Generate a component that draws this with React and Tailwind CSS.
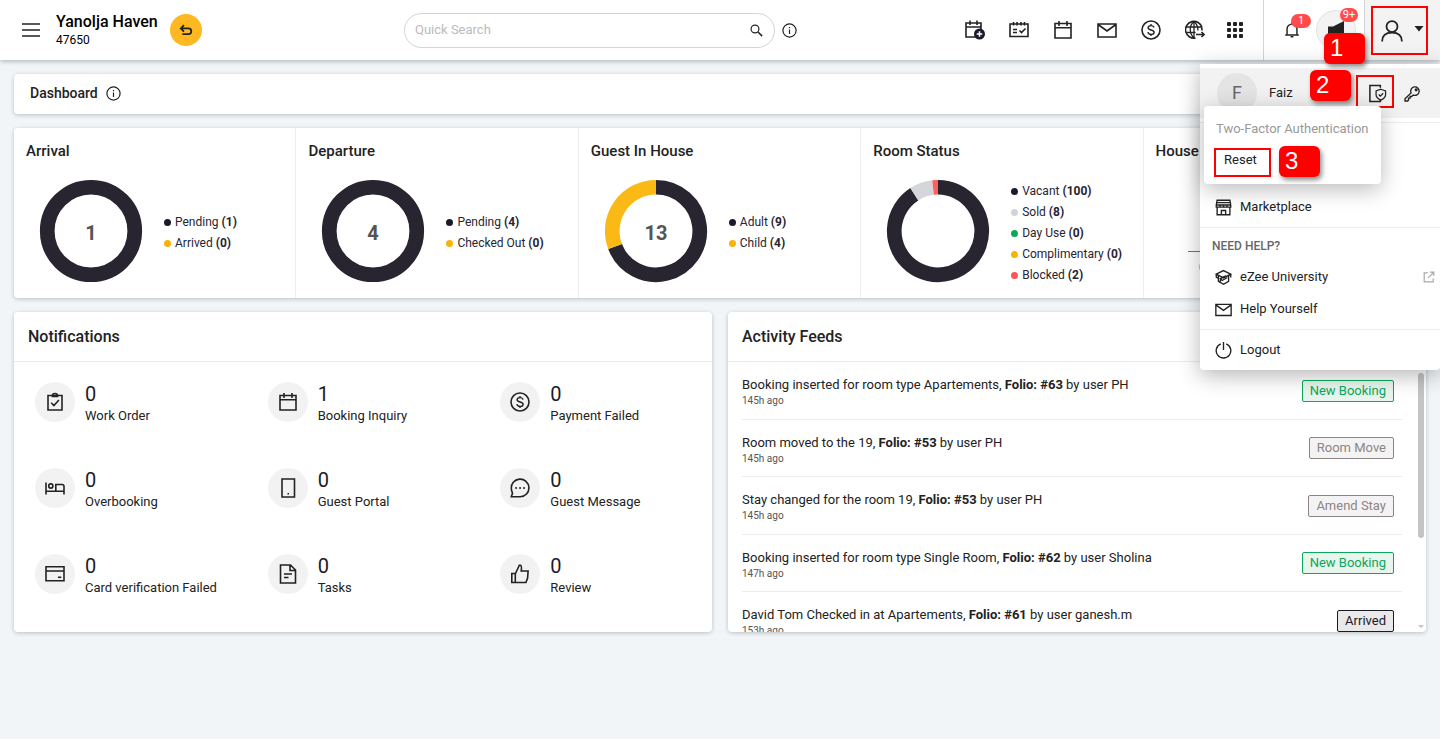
const STATS = [
  { title: 'Arrival', total: '1', items: [
    { label: 'Pending', value: 1, color: '#1c1a2a', ring: '#282430' },
    { label: 'Arrived', value: 0, color: '#f9b208' },
  ] },
  { title: 'Departure', total: '4', items: [
    { label: 'Pending', value: 4, color: '#1c1a2a', ring: '#282430' },
    { label: 'Checked Out', value: 0, color: '#f9b208' },
  ] },
  { title: 'Guest In House', total: '13', items: [
    { label: 'Adult', value: 9, color: '#1c1a2a', ring: '#282430' },
    { label: 'Child', value: 4, color: '#f9b208', ring: '#fab915' },
  ] },
  { title: 'Room Status', total: '', items: [
    { label: 'Vacant', value: 100, color: '#1c1a2a', ring: '#282430' },
    { label: 'Sold', value: 8, color: '#d2d3d8', ring: '#d5d6da' },
    { label: 'Day Use', value: 0, color: '#0aa858' },
    { label: 'Complimentary', value: 0, color: '#f9b208' },
    { label: 'Blocked', value: 2, color: '#ff5454', ring: '#ff5f5f' },
  ] },
]

const FEEDS = [
  { before: 'Booking inserted for room type Apartements, ', folio: '#63', by: 'PH', ago: '145h ago', tag: 'New Booking' },
  { before: 'Room moved to the 19, ', folio: '#53', by: 'PH', ago: '145h ago', tag: 'Room Move' },
  { before: 'Stay changed for the room 19, ', folio: '#53', by: 'PH', ago: '145h ago', tag: 'Amend Stay' },
  { before: 'Booking inserted for room type Single Room, ', folio: '#62', by: 'Sholina', ago: '147h ago', tag: 'New Booking' },
  { before: 'David Tom Checked in at Apartements, ', folio: '#61', by: 'ganesh.m', ago: '153h ago', tag: 'Arrived' },
]

const TAG_STYLES = {
  'New Booking': 'border-[#0aa858] bg-[#e8f5ee] text-[#0aa858]',
  'Room Move': 'border-[#8d8486] bg-[#f4f3f3] text-[#8d8486]',
  'Amend Stay': 'border-[#8d8486] bg-[#f4f3f3] text-[#8d8486]',
  Arrived: 'border-[#1c1a2a] bg-[#e9e9ea] text-[#1c1a2a]',
}

const ICONS = {
  menu: <path d="M1 4h18M1 10h18M1 16h18" strokeWidth="1.6" />,
  undo: <path d="M7.5 4 3.500 8l4 4M4 8h9a3.600 3.600 0 0 1 0 7.200H5.500" strokeWidth="2.200" />,
  search: <><circle cx="8" cy="8" r="5.2" /><path d="m12 12 5.5 5.5" strokeWidth="2" /></>,
  info: <><circle cx="10" cy="10" r="8.8" /><path d="M10 8.5v6M10 5.3v1.8" /></>,
  calendarPlus: <>
    <path d="M1 3h15v14H1zM1 7h15M5 .5V5M12 .5V5" />
    <circle cx="14.5" cy="14" r="5.5" fill="#1c1a2a" stroke="none" />
    <path d="M14.5 11.2v5.6M11.7 14h5.6" stroke="#fff" />
  </>,
  calendarCheck: <>
    <path d="M1 4h18v12.5H1zM4.5 2v3.5M8 2v3.5M12 2v3.5M15.5 2v3.5" />
    <path d="M4 9.5h4M4 12.5h4M10.5 10.5l2 2 4-4" />
  </>,
  calendar: <path d="M2 3.5h16v14.5H2zM2 7.8h16M6 1v5M14 1v5" />,
  mail: <path d="M1 4h18v13H1zM1 4.5 10 11l9-6.500" />,
  dollar: <>
    <circle cx="10" cy="10" r="9" />
    <path d="M13 7.600c-.3-1.300-1.400-2-3-2s-2.900.7-2.900 2.100c0 3 6 1.500 6 4.500 0 1.400-1.300 2.200-3 2.200s-3-.8-3.200-2.200M10 3.900v1.700M10 14.400V16" strokeWidth="1.400" />
  </>,
  globe: <>
    <path d="M17 7.500A8.400 8.400 0 1 0 10.500 18" />
    <path d="M9 1.500c-5 4-5 12 0 16.500M9 1.500c3 2.400 4 5.500 3.900 9M9 1.500v16.500M1 7h16M1 12.500h9.500" strokeWidth="1.300" />
    <path d="M16.500 7.500c.4 1 .6 2 .5 3M11 14.500h8M16.500 12l2.600 2.500-2.600 2.500" />
  </>,
  bell: <path d="M2.500 15.500h15M4.500 15.500V9a5.500 5.500 0 0 1 11 0v6.500M10 3.500V1.500M8.500 17.500h3" />,
  user: <><circle cx="10" cy="6" r="5" /><path d="M1 19.500c0-5.500 3.800-8 9-8s9 2.500 9 8" /></>,
  shieldPhone: <>
    <path d="M13 4V1.500H2v17h11V16.500" />
    <path d="m13.500 5.500 5 1.800v4c0 2.700-2 4.300-5 5.700-3-1.400-5-3-5-5.700v-4zM11.300 11l1.700 1.700 3-3" strokeWidth="1.300" />
  </>,
  key: <>
    <path d="M8.300 9.300a5 5 0 1 1 2.500 2.500L9 13.500H7.200v2H5.300v2.300l-1 1H1.200v-2.500z" />
    <circle cx="14.300" cy="5.700" r="1" />
  </>,
  store: <>
    <path d="M2.500 1.500h15l1 5.500v2.500H1.500V7zM2.500 4.200h15M1.800 7h16.400M2.500 9.500v9h15v-9M7.500 18.500v-5h5v5" />
    <path d="M6 7v2.500M10 7v2.500M14 7v2.500" />
  </>,
  university: <>
    <path d="M1.500 6 10 1.800 18.500 6 10 10.500zM4 7.800v6.700l6 3.500 6-3.500V7.800M1.500 6v3.500l2.500 1.500M18.500 6v4" />
    <path d="M6 15.500c0-4 2.500-6.500 7-7.500M5.500 10.500l3 3 6-3.500" />
  </>,
  power: <path d="M6.800 2.200a8.600 8.600 0 1 0 6.400 0M10 0v9.500" />,
  external: <path d="M8 3H2v15h15v-6M11.500 2H18v6.500M17.500 2.500 8.500 11.500" strokeWidth="2" />,
  clipboard: <path d="M3 3.500h14V18H3zM7.500 3.500a2.500 2 0 0 1 5 0v1h-5zM6.200 10.800l2.700 2.700 5-5.500" />,
  bed: <><path d="M1 4.500v12M1 13.300h18M19 16.500v-8h0a2 2 0 0 0-2-2h-6.200v6.800" /><circle cx="5.800" cy="8" r="2.100" /></>,
  phone: <><path d="M4 1h12.500v18H4z" /><path d="M9.500 15.800h1.500" /></>,
  message: <><path d="M1.300 18.700h8.900A8.800 8.800 0 1 0 1.400 11c.1 1.800.7 3.200 1.100 4.200z" /><path d="M5.300 10h1.500M9.300 10h1.500M13.300 10h1.500" strokeWidth="2" /></>,
  card: <><path d="M1 2.800h18v14H1zM1 7h18" /><path d="M13 13.300h3.300" /></>,
  doc: <path d="M2.500 1h10l5 5v13h-15zM12 1.500v5h5M6 10h8M6 13.500h4.500" />,
  thumb: <path d="M1.800 9.500h3.500v9H1.800zM5.300 10 8.500 3c.5-1.800 1-2 1.900-1.800 1.300.3 1.400 1.800.8 5.800h6.900l-.5 7-1.700 4.500H5.300" />,
}

const NOTIFICATIONS = [
  { icon: 'clipboard', count: 0, label: 'Work Order' },
  { icon: 'calendar', count: 1, label: 'Booking Inquiry' },
  { icon: 'dollar', count: 0, label: 'Payment Failed' },
  { icon: 'bed', count: 0, label: 'Overbooking' },
  { icon: 'phone', count: 0, label: 'Guest Portal' },
  { icon: 'message', count: 0, label: 'Guest Message' },
  { icon: 'card', count: 0, label: 'Card verification Failed' },
  { icon: 'doc', count: 0, label: 'Tasks' },
  { icon: 'thumb', count: 0, label: 'Review' },
]

function Icon({ name, className = 'size-5' }) {
  return (
    <svg viewBox="0 0 20 20" fill="none" stroke="currentColor" strokeWidth="1.6" className={`shrink-0 ${className}`} aria-hidden="true">
      {ICONS[name]}
    </svg>
  )
}

const RADIUS = 43.75

function pointAt(share) {
  const a = share * 2 * Math.PI
  return `${52 + RADIUS * Math.sin(a)} ${52 - RADIUS * Math.cos(a)}`
}

function Donut({ items, total }) {
  const sum = items.reduce((n, i) => n + i.value, 0)
  let used = 0
  return (
    <svg viewBox="0 0 104 104" className="size-26 shrink-0" fill="none" strokeWidth="14.7">
      {items.filter(i => i.value > 0).map(item => {
        if (item.value === sum) return <circle key={item.label} cx="52" cy="52" r={RADIUS} stroke={item.ring} />
        const from = used / sum
        used += item.value
        const large = item.value / sum > 0.5 ? 1 : 0
        return (
          <path
            key={item.label} stroke={item.ring}
            d={`M${pointAt(from)}A${RADIUS} ${RADIUS} 0 ${large} 1 ${pointAt(used / sum)}`}
          />
        )
      })}
      <text x="52" y="61" textAnchor="middle" fontSize="20" fontWeight="700" fill="#555">{total}</text>
    </svg>
  )
}

function StatCard({ title, items, total }) {
  return (
    <section className="border-r border-[#eceef0]">
      <h2 className="pl-3 pt-[11px] text-[15px] leading-6 font-medium">{title}</h2>
      <div className="flex gap-[21px] pl-[25px] pt-4">
        <Donut items={items} total={total} />
        <ul className="flex h-26 flex-col justify-center pt-1 text-xs leading-[21px] whitespace-nowrap text-[#282430]">
          {items.map(item => (
            <li key={item.label} className="flex items-center gap-1">
              <span className="size-[7px] rounded-full" style={{ backgroundColor: item.color }} />
              <span>{item.label} <b>({item.value})</b></span>
            </li>
          ))}
        </ul>
      </div>
    </section>
  )
}

function Callout({ children, className }) {
  return (
    <span className={`absolute z-40 h-[31px] w-[41px] rounded-md bg-[#fe0000] pl-1.5 font-['Liberation_Sans'] text-2xl leading-[29px] text-white shadow-[2px_3px_5px_rgba(0,0,0,0.45)] ${className}`}>
      {children}
    </span>
  )
}

function MenuLink({ icon, children, external }) {
  return (
    <a href="#" className="flex h-8 items-center gap-2 pl-[15px] pr-[5px] text-[13px]">
      <Icon name={icon} className="size-[17px]" />
      <span className="flex-1">{children}</span>
      {external && <Icon name="external" className="size-3 text-[#aaa]" />}
    </a>
  )
}

function ProfileMenu() {
  return (
    <div className="absolute right-0 top-16 z-20 w-60 rounded-b bg-white pt-1 shadow-[0_5px_22px_rgba(0,0,0,0.3)]">
      <div className="relative flex h-[50px] items-center bg-[#f2f2f2] pl-[17px] pr-[19px]">
        <span className="flex size-10 items-center justify-center rounded-full bg-[#e4e4e4] text-lg text-[#666]">F</span>
        <span className="pl-3 text-[13px]">Faiz</span>
        <button aria-label="Two-factor authentication" className="mb-[3px] ml-auto flex h-[33px] w-[38px] items-center justify-center border-2 border-[#fe0000] pl-1 pt-1">
          <Icon name="shieldPhone" className="size-[19px]" />
        </button>
        <button aria-label="Change password" className="pl-2.5"><Icon name="key" className="size-[17px]" /></button>
        <Callout className="left-[110px] top-0.5">2</Callout>

        <div className="absolute left-1 top-[38px] z-30 h-[78px] w-[177px] rounded-sm bg-white px-3 pt-[13px] text-[13px] shadow-[0_5px_22px_rgba(0,0,0,0.28)]">
          <p className="leading-5 whitespace-nowrap text-[#999]">Two-Factor Authentication</p>
          <button className="-ml-0.5 mt-[9px] h-[29px] w-[57px] border-2 border-[#fe0000] pb-1.5 pr-1 text-center">Reset</button>
          <Callout className="left-[75px] top-10">3</Callout>
        </div>
      </div>
      <div className="mt-1 border-t border-[#ececec] pb-1 pt-[68px]">
        <MenuLink icon="store">Marketplace</MenuLink>
      </div>
      <div className="border-t border-[#ececec] pb-1 pt-px">
        <h3 className="flex h-8 items-center pl-3 pt-0.5 text-xs font-medium text-[#666]">NEED HELP?</h3>
        <MenuLink icon="university" external>eZee University</MenuLink>
        <MenuLink icon="mail">Help Yourself</MenuLink>
      </div>
      <div className="border-t border-[#ececec] py-1">
        <MenuLink icon="power">Logout</MenuLink>
      </div>
    </div>
  )
}

function Header() {
  return (
    <header className="relative z-10 flex h-15 bg-white shadow-[0_1px_5px_rgba(0,0,0,0.3)]">
      <div className="flex w-[404px] shrink-0 items-center pl-[21px]">
        <button aria-label="Menu"><Icon name="menu" /></button>
        <div className="pl-[15px]">
          <h1 className="text-base leading-5 font-medium text-black">Yanolja Haven</h1>
          <p className="text-xs leading-4 text-black">47650</p>
        </div>
        <button aria-label="Back" className="ml-3 flex size-8 items-center justify-center rounded-full bg-[#ffb822]">
          <Icon name="undo" className="size-4" />
        </button>
      </div>
      <label className="mt-[13px] flex h-[35px] max-w-[371px] flex-1 items-center rounded-full border border-[#d4d4d4] pl-2.5 pr-2.5 pb-px">
        <input type="text" aria-label="Quick Search" placeholder="Quick Search" className="min-w-0 flex-1 text-[13px] outline-none placeholder:text-[#bbb]" />
        <Icon name="search" className="size-[15px]" />
      </label>
      <button aria-label="Search help" className="pl-[7px]"><Icon name="info" className="size-[15px]" /></button>

      <nav className="ml-auto flex items-center pr-[10px]">
        {['calendarPlus', 'calendarCheck', 'calendar', 'mail', 'dollar', 'globe'].map(name => (
          <button key={name} aria-label={name} className="flex w-11 justify-center"><Icon name={name} /></button>
        ))}
        <button aria-label="Apps" className="flex w-9 justify-center">
          <svg viewBox="0 0 16 16" className="size-4" fill="currentColor">
            {[0, 6, 12].map(y => [0, 6, 12].map(x => <rect key={`${x}-${y}`} x={x} y={y} width="4" height="4" rx="1" />))}
          </svg>
        </button>
      </nav>
      <div className="relative flex w-[101px] shrink-0 items-center border-l border-[#d4d4d4] pl-[19px]">
        <button aria-label="Alerts"><Icon name="bell" className="size-[18px]" /></button>
        <span className="absolute left-[27px] top-3.5 h-3.5 w-5 rounded-full bg-[#ff4b4b] text-center text-[11px] leading-[14px] text-white">1</span>
        <button aria-label="Announcements" className="ml-[15px] flex size-10 items-center justify-center rounded-full border border-[#e2e2e2] bg-[#f3f3f3]">
          <svg viewBox="0 0 20 20" className="size-5" fill="#222"><path d="M2 6.500h5L18 1v16L7 14v4.500H4V14H2z" /></svg>
        </button>
        <span className="absolute left-[76px] top-2 h-3.5 w-[18px] rounded-full bg-[#ff4b4b] text-center text-[11px] leading-[14px] text-white">9+</span>
        <Callout className="left-[60px] top-[33px]">1</Callout>
      </div>
      <div className="w-[76px] shrink-0 border-l border-[#d4d4d4] bg-[#f3f3f3] pl-1.5 pt-1.5">
        <button aria-label="Profile" className="flex h-[49px] w-[57px] items-center gap-[11px] border-2 border-[#fe0000] pl-2">
          <Icon name="user" className="size-[22px]" />
          <svg viewBox="0 0 10 6" className="mb-1 h-1.5 w-2.5 shrink-0" fill="#222"><path d="M.5 0h9L5 5.500z" /></svg>
        </button>
      </div>
      <ProfileMenu />
    </header>
  )
}

function Panel({ title, children }) {
  return (
    <section className="rounded-sm bg-white shadow-[0_1px_4px_rgba(0,0,0,0.22)]">
      <h2 className="h-[50px] border-b border-[#e9ebed] px-3.5 text-base leading-[49px] font-medium">{title}</h2>
      {children}
    </section>
  )
}

export default function App() {
  return (
    <div className="min-h-screen bg-[#f1f5f8] font-[Roboto,sans-serif] text-[#222]">
      <Header />
      <main className="flex flex-col gap-3.5 p-3.5">
        <div className="flex h-10 items-center gap-2 rounded-sm bg-white px-4 pb-0.5 shadow-[0_1px_4px_rgba(0,0,0,0.22)]">
          <h2 className="text-sm font-medium">Dashboard</h2>
          <Icon name="info" className="size-[15px]" />
        </div>

        <div className="grid h-[170px] grid-cols-5 overflow-hidden rounded-sm bg-white shadow-[0_1px_4px_rgba(0,0,0,0.22)]">
          {STATS.map(s => <StatCard key={s.title} {...s} />)}
          <section>
            <h2 className="pl-3 pt-[11px] text-[15px] leading-6 font-medium">House</h2>
            <svg viewBox="0 0 220 40" className="ml-11 mt-22 h-10 w-[220px]">
              <path d="M0 .5h220" stroke="#777" />
              <text x="11" y="20" fontSize="11" fill="#555">0</text>
            </svg>
          </section>
        </div>

        <div className="grid grid-cols-2 gap-4">
          <Panel title="Notifications">
            <ul className="grid grid-cols-3 gap-y-[46px] pb-[38px] pt-5">
              {NOTIFICATIONS.map(n => (
                <li key={n.label} className="flex h-10 items-center gap-2.5 pl-[21px]">
                  <span className="flex size-10 items-center justify-center rounded-full bg-[#f2f2f2]"><Icon name={n.icon} /></span>
                  <div className="pt-1">
                    <p className="text-xl leading-6 text-[#1c1a2a]">{n.count}</p>
                    <p className="text-[13px] leading-5">{n.label}</p>
                  </div>
                </li>
              ))}
            </ul>
          </Panel>

          <Panel title="Activity Feeds">
            <div className="relative h-[270px] overflow-hidden pl-3.5 pr-6">
              {FEEDS.map((f, i) => (
                <div key={i} className="flex items-center justify-between border-b border-[#ececec] pr-2 odd:h-[58px] even:h-[57px]">
                  <div className="pt-[3px]">
                    <p className="text-[13px] leading-[18px]">{f.before}<b>Folio: {f.folio}</b> by user {f.by}</p>
                    <p className="text-[10px] leading-[14px] text-[#555]">{f.ago}</p>
                  </div>
                  <span className={`h-[22px] rounded-xs border px-[7px] text-[13px] leading-5 ${TAG_STYLES[f.tag]}`}>{f.tag}</span>
                </div>
              ))}
              <div className="absolute right-0.5 top-[11px] h-[165px] w-1.5 rounded-full bg-[#c4c4c4]" />
              <svg viewBox="0 0 6 3" className="absolute bottom-1 right-0.5 h-[3px] w-1.5" fill="#c4c4c4"><path d="M0 0h6L3 3z" /></svg>
            </div>
          </Panel>
        </div>
      </main>
    </div>
  )
}
